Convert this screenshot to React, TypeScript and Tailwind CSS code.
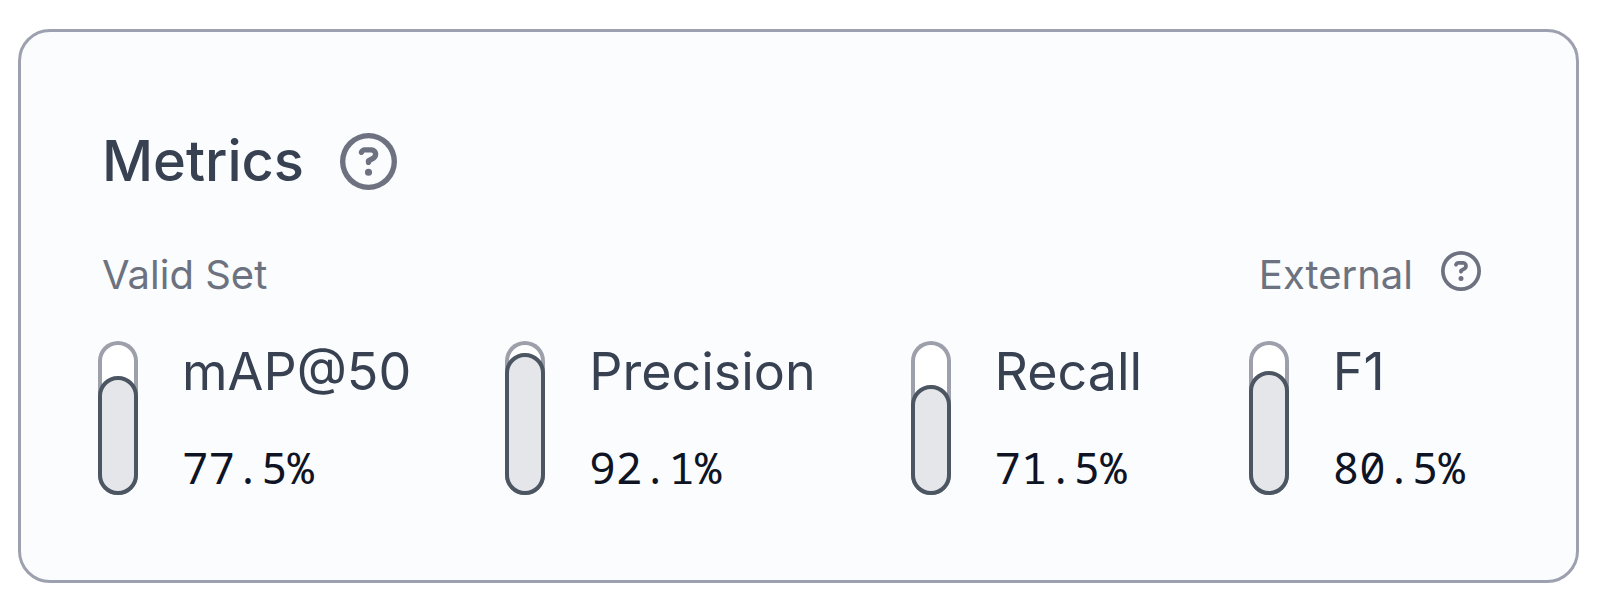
import React from "react";
import { FaRegCircleQuestion } from "react-icons/fa6";

type Metric = {
  name: string;
  value: number;
};

const metrics: Metric[] = [
  { name: "mAP@50", value: 77.5 },
  { name: "Precision", value: 92.1 },
  { name: "Recall", value: 71.5 },
  { name: "F1", value: 80.5 }
];

const Gauge = ({ value }: { value: number }) => (
  <div className="flex h-[154px] w-10 shrink-0 items-end rounded-full bg-white inset-ring-4 inset-ring-[#9da0ab]">
    <div
      className="w-full rounded-full border-4 border-[#4c5562] bg-[#e5e6ea]"
      style={{ height: `${value}%` }}
    />
  </div>
);

const MetricItem = ({ name, value }: Metric) => (
  <div className="flex gap-11">
    <Gauge value={value} />
    <dl className="flex flex-col gap-[38px]">
      <dt className="text-[52px] leading-[62px] text-[#374151]">{name}</dt>
      <dd className="font-['Noto_Sans_Mono','DejaVu_Sans_Mono',monospace] text-[44px] leading-[52px] text-[#0f1424]">
        {value.toFixed(1)}%
      </dd>
    </dl>
  </div>
);

const App = () => {
  return (
    <main className="bg-white pt-[29px] pr-[21px] pb-5 pl-[18px] font-['Inter',sans-serif]">
      <section className="rounded-[32px] border-3 border-[#9da0ae] bg-[#fafcfd] pt-[89px] pr-[95px] pb-[85px] pl-[77px]">
        <div className="flex items-center gap-9 pl-1">
          <h2 className="text-[56px] leading-20 font-medium text-[#374151]">
            Metrics
          </h2>
          <button type="button" aria-label="About metrics">
            <FaRegCircleQuestion className="size-[57px] text-[#6d7180]" />
          </button>
        </div>
        <div className="mt-11 flex items-center justify-between pl-1 text-[40px] leading-[60px] text-[#6c7280]">
          <span>Valid Set</span>
          <div className="flex items-center gap-7">
            <span>External</span>
            <button type="button" aria-label="About external" className="pb-2">
              <FaRegCircleQuestion className="size-10 text-[#6d7180]" />
            </button>
          </div>
        </div>
        <div className="mt-9 grid grid-cols-[407fr_405fr_338fr_232fr]">
          {metrics.map((metric) => (
            <MetricItem key={metric.name} {...metric} />
          ))}
        </div>
      </section>
    </main>
  );
};

export default App;
